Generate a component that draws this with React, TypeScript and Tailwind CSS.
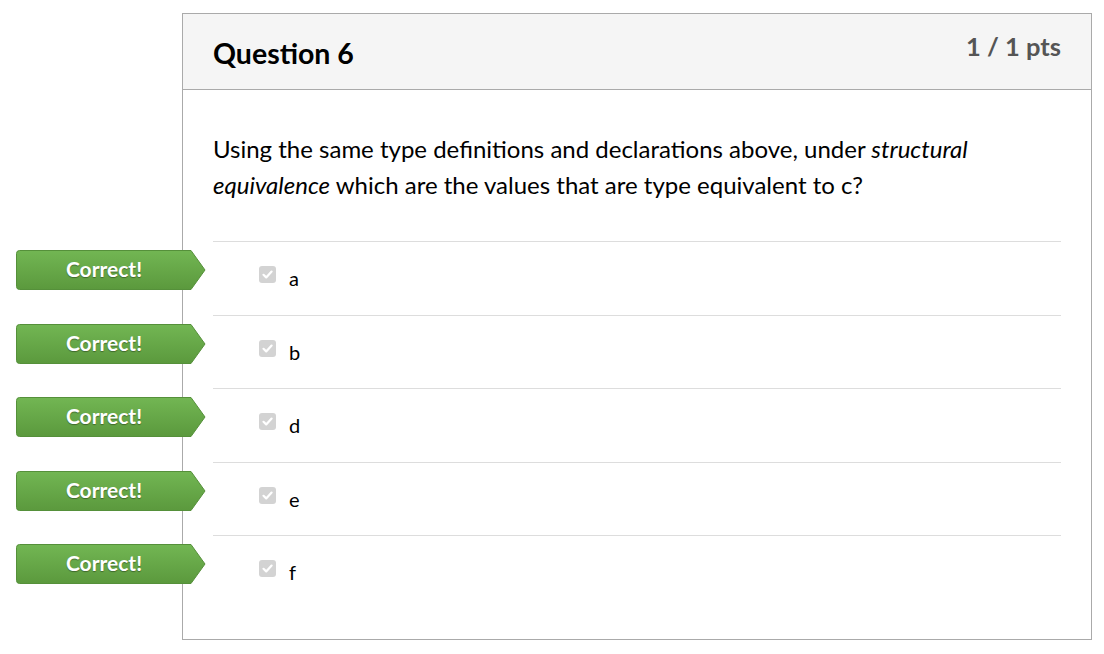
import React from "react";

function Badge() {
  return (
    <div className="absolute left-[-197px] top-[8px] w-[190px] h-[40px]">
      <svg width="190" height="40" viewBox="0 0 190 40" className="absolute inset-0">
        <defs>
          <linearGradient id="g" x1="0" y1="0" x2="0" y2="1">
            <stop offset="0" stopColor="#72b653" />
            <stop offset="1" stopColor="#5b993d" />
          </linearGradient>
        </defs>
        <path d="M3.5 0.5 H175 L189 20 L175 39.5 H3.5 Q0.5 39.5 0.5 36.5 V3.5 Q0.5 0.5 3.5 0.5 Z" fill="url(#g)" stroke="#55903a" strokeWidth="1" />
      </svg>
      <div className="absolute left-0 top-0 w-[176px] h-[40px] flex items-center justify-center text-white font-bold text-[21px] [text-shadow:0_1px_1px_rgba(0,0,0,0.35)] pb-[3px]">
        Correct!
      </div>
    </div>
  );
}

function Check() {
  return (
    <div className="w-[17px] h-[17px] rounded-[3px] bg-[#d3d3d3] flex items-center justify-center shrink-0">
      <svg width="13" height="13" viewBox="0 0 13 13">
        <path d="M2.5 6.8 L5.2 9.4 L10.6 3.6" fill="none" stroke="#ffffff" strokeWidth="2.2" strokeLinecap="round" strokeLinejoin="round" />
      </svg>
    </div>
  );
}

export default function App() {
  const answers = ["a", "b", "d", "e", "f"];
  return (
    <div className="w-[1104px] h-[654px] bg-white pt-[13px] pl-[182px] font-['Lato',sans-serif] text-[#2d3b45]">
      <div className="w-[910px] h-[627px] border border-[#aaaaaa]">
        <div className="h-[76px] bg-[#f5f5f5] border-b border-[#aaaaaa] flex justify-between px-[30px]">
          <div className="text-[28.5px] font-bold text-black pt-[21px] leading-[36px]">Question 6</div>
          <div className="text-[25.5px] font-bold text-[#555555] pt-[17px] leading-[30px]">1 / 1 pts</div>
        </div>
        <div className="px-[30px] pt-[41px]">
          <p className="text-[24px] leading-[36px] text-black">
            Using the same type definitions and declarations above, under <em>structural equivalence</em> which are the values that are type equivalent to c?
          </p>
          <div className="mt-[38px]">
            {answers.map((a, i) => (
              <div key={a} className={`relative border-t border-[#dddddd] ${i % 2 === 0 ? "h-[74px]" : "h-[73px]"}`}>
                <Badge />
                <div className="flex items-start pl-[46px] pt-[24px]">
                  <Check />
                  <span className="ml-[13px] mt-[-1px] text-[20px] text-black leading-[26px]">{a}</span>
                </div>
              </div>
            ))}
          </div>
        </div>
      </div>
    </div>
  );
}
